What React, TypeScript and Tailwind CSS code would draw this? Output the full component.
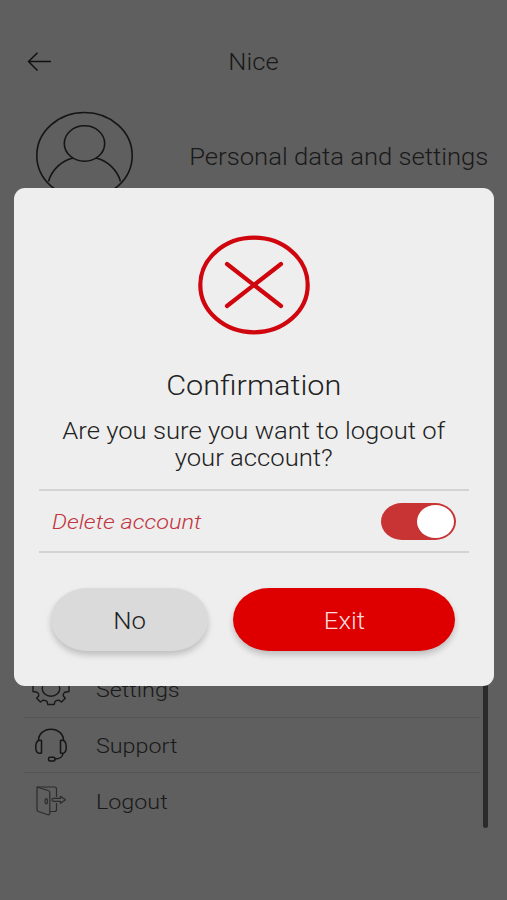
import * as React from "react";

const menuItems = [
  { label: "Settings", icon: <GearIcon /> },
  { label: "Support", icon: <HeadsetIcon /> },
  { label: "Logout", icon: <DoorIcon /> },
];

function GearIcon() {
  return (
    <svg width="38" height="34" viewBox="0 0 38 34" fill="none" stroke="#191919" strokeWidth="1.4" strokeLinejoin="round">
      <path d="M15 29.500 15.800 32.500H22.200L23 29.500Q24.500 28 26.800 28.200L29.500 30 33.300 26.200 31.200 23.800Q31 21.500 32.800 20.200L37 19.500V13.500L32.800 12.800Q31 11.500 31.200 9.200L33.300 6.800 29.500 3 26.800 4.800Q24.500 5 23 3.500L22.200.7H15.800L15 3.500Q13.500 5 11.200 4.800L8.500 3 4.700 6.800 6.800 9.200Q7 11.500 5.200 12.800L1 13.500V19.500L5.200 20.200Q7 21.500 6.800 23.800L4.700 26.200 8.500 30 11.200 28.200Q13.500 28 15 29.500Z" />
      <ellipse cx="19" cy="16.500" rx="8.800" ry="7.700" />
    </svg>
  );
}

function HeadsetIcon() {
  return (
    <svg width="34" height="34" viewBox="0 0 34 34" fill="none" stroke="#151515" strokeWidth="1.5" strokeLinejoin="round">
      <path d="M4.500 12.500C4.500 6 10 1.200 17 1.200S29.500 6 29.500 12.500" />
      <path d="M7.500 12.500c-3.500-.8-5.800 1-5.800 6.500s2.300 7 5.800 6z" />
      <path d="M26.500 12.500c3.500-.8 5.800 1 5.800 6.500s-2.300 7-5.800 6z" />
      <path d="M29 25.500c-.5 4-3.500 5.500-8.500 5.500" />
      <rect x="14.500" y="29.300" width="6.500" height="3.700" rx="1.500" />
    </svg>
  );
}

function DoorIcon() {
  return (
    <svg width="34" height="34" viewBox="0 0 34 34" fill="none" stroke="#2c2c2c" strokeWidth="1.2" strokeLinejoin="round">
      <path d="M3 3h17.500c1.500 0 2 .8 2 2v8M22.500 19v6.500c0 1.300-.7 2-2 2H16" />
      <path d="M3 3 14 6.500c1.200.4 1.800 1 1.800 2v21c0 1-.6 1.500-1.800 1.200L4.300 27.500c-.8-.3-1.300-.8-1.300-1.800z" />
      <ellipse cx="12.300" cy="17.200" rx="1.200" ry="2.500" />
      <path d="M19.500 14.300h7v-2l5 3.500-5 3.500v-2h-7c-2 0-2-3 0-3z" />
    </svg>
  );
}

function Avatar() {
  return (
    <svg width="98" height="98" viewBox="0 0 98 98" fill="none" stroke="#151515" strokeWidth="1.600">
      <ellipse cx="48.500" cy="44.500" rx="47.700" ry="43" />
      <ellipse cx="48.500" cy="32.500" rx="20.200" ry="17.700" />
      <path d="M12.500 70.500C16 58.500 26 49.500 37 47M60 47C71 49.500 81 58.500 84.500 70.500" />
    </svg>
  );
}

const Page = () => {
  return (
    <div className="flex h-full flex-col text-[#191919]">
      <header className="grid h-[124px] grid-cols-3 items-center">
        <svg className="ml-[27px]" width="25" height="20" viewBox="0 0 25 20" fill="none" stroke="#111111" strokeWidth="1.500">
          <path d="M24 9.500H1.500M10.500.8 1.500 9.500l9 9" />
        </svg>
        <h1 className="scale-x-[1.11] pt-[3px] text-center text-[23px]">Nice</h1>
      </header>
      <section className="-mt-[13px] flex h-[64px] items-start justify-between pr-[19px] pl-[36px]">
        <Avatar />
        <p className="mt-[30px] origin-right scale-x-[1.115] text-[23px]/[34px] whitespace-nowrap">Personal data and settings</p>
      </section>
      <section className="mt-[487px] flex h-[166px] shrink-0 justify-between pr-[19px] pl-[24px]">
        <ul className="w-[456px]">
          {menuItems.map((item) => (
            <li key={item.label} className="flex h-[55.5px] items-center border-b border-[#555555] pl-[8px] last:border-0">
              <span className="flex w-[38px] justify-center">{item.icon}</span>
              <span className="ml-[25.5px] origin-left scale-x-[1.11] pt-[3px] text-[21px]">{item.label}</span>
            </li>
          ))}
        </ul>
        <div className="w-[5px] rounded-b-sm bg-[#2a2a2a]" />
      </section>
    </div>
  );
};

const App = () => {
  const [deleteAccount, setDeleteAccount] = React.useState(true);

  return (
    <div className="relative h-[900px] w-[507px] overflow-hidden bg-[#5f5f5f] font-['Roboto',sans-serif] font-light">
      <Page />
      <div className="absolute inset-0 pt-[188px] pl-[13.5px]">
        <div role="dialog" className="flex h-[497.5px] w-[480.5px] flex-col rounded-[11px] bg-[#eeeeee] px-[25.5px] pt-[47px] text-[#222222]">
          <svg className="mx-auto" width="112" height="100" viewBox="0 0 112 100" fill="none" stroke="#d0060e" strokeWidth="4.200">
            <ellipse cx="56" cy="50" rx="53.700" ry="47.300" />
            <path d="M29 29l54 42M83 29L29 71" strokeLinecap="round" />
          </svg>
          <h2 className="mt-[34px] scale-x-[1.135] text-center text-[27px]/[34px]">Confirmation</h2>
          <p className="mt-[15px] scale-x-[1.115] text-center text-[23px]/[27px]">
            Are you sure you want to logout of
            <br />
            your account?
          </p>
          <div className="mt-[17px] flex h-[64px] items-center justify-between border-y-2 border-[#d3d3d3] pr-[13px] pl-[13px]">
            <span className="origin-left scale-x-[1.12] pt-[3px] text-[21px] text-[#c2343f] italic">Delete account</span>
            <button
              role="switch"
              aria-checked={deleteAccount}
              onClick={() => setDeleteAccount(!deleteAccount)}
              className={`flex h-[37px] w-[75px] items-center rounded-[21px/18.5px] px-[2px] ${deleteAccount ? "justify-end bg-[#c83334]" : "justify-start bg-gray-400"}`}
            >
              <span className="h-[33px] w-[37px] rounded-[50%] bg-white" />
            </button>
          </div>
          <div className="mt-[35px] flex gap-[25px] pl-[12px] text-[23px]">
            <button className="h-[63px] w-[157px] rounded-[36px/31.5px] bg-[#dadada] shadow-[0_4px_6px_rgba(0,0,0,0.2)]">
              <span className="inline-block scale-x-[1.12] pt-[5px]">No</span>
            </button>
            <button className="h-[63px] w-[222px] rounded-[36px/31.5px] bg-[#de0000] text-[#fbdcdc] shadow-[0_4px_6px_rgba(0,0,0,0.2)]">
              <span className="inline-block scale-x-[1.12] pt-[5px]">Exit</span>
            </button>
          </div>
        </div>
      </div>
    </div>
  );
};

export default App;
